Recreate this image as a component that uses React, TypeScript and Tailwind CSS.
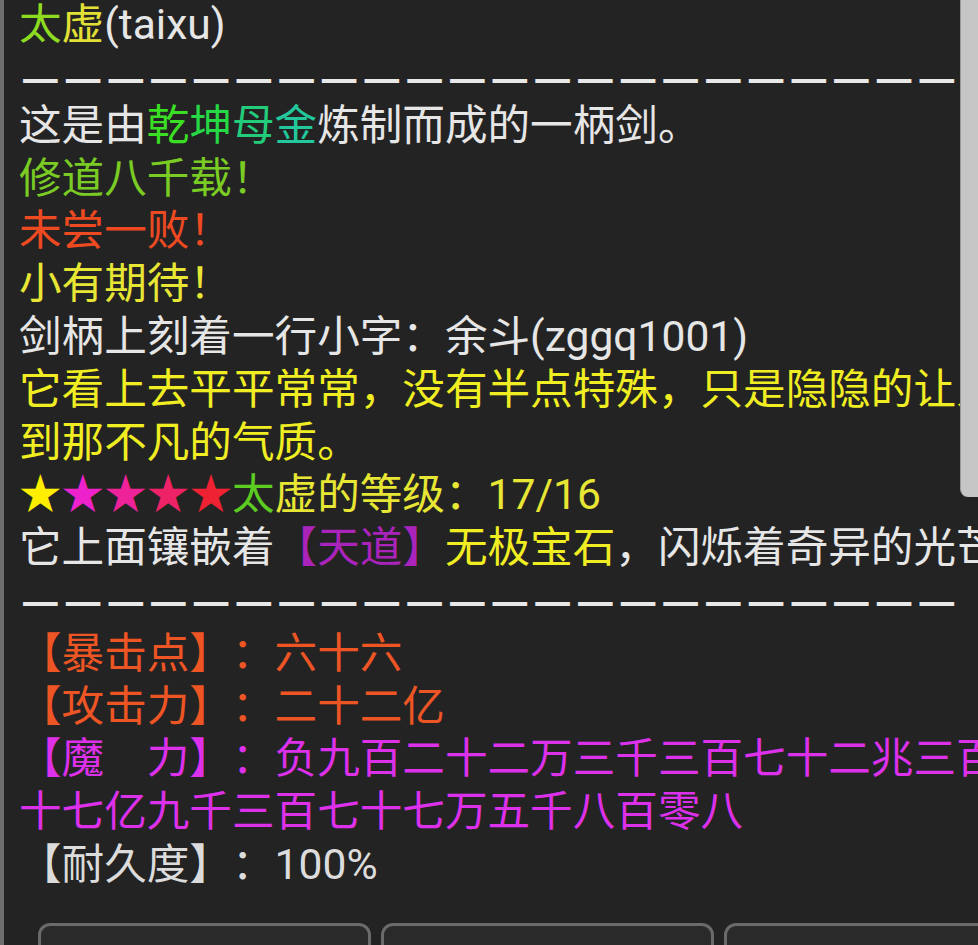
import type { ReactNode } from "react";

const DASH_COUNT = 22;

function Row({ children, className = "" }: { children: ReactNode; className?: string }) {
  return <div className={`h-[52.8px] whitespace-nowrap ${className}`}>{children}</div>;
}

// the dashed rule is a run of em dashes, one per character cell
function Separator({ className = "" }: { className?: string }) {
  return (
    <div className={`flex whitespace-nowrap font-['Noto_Sans_CJK_SC',sans-serif] font-bold text-[#e8e8e8] ${className}`}>
      {Array.from({ length: DASH_COUNT }).map((_, i) => (
        <span key={i} className="inline-block w-[42.7px] text-center">
          —
        </span>
      ))}
    </div>
  );
}

const stars = ["text-[#ffee00]", "text-[#ee22cc]", "text-[#ee2299]", "text-[#ee2266]", "text-[#ee2233]"];

export default function App() {
  return (
    <div className="relative h-[945px] w-[978px] overflow-hidden border-l-[4px] border-[#6e6e6e] bg-[#232323] font-['Roboto','Noto_Sans_CJK_SC',sans-serif] text-[42.6px] leading-[52.8px] text-[#e6e6e6] [text-spacing-trim:space-all]">
      <div className="-mt-[2px] pl-[15px]">
        <Row>
          <span className="text-[#8edc22]">太</span>
          <span className="text-[#e2e036]">虚</span>
          <span>(taixu)</span>
        </Row>
        <Separator className="h-[48px] leading-[48px]" />
        <Row>
          这是由
          <span className="text-[#3ade22]">乾</span>
          <span className="text-[#26d846]">坤</span>
          <span className="text-[#22cc7a]">母</span>
          <span className="text-[#22c89c]">金</span>
          炼制而成的一柄剑。
        </Row>
        <Row className="text-[#7acc24]">修道八千载！</Row>
        <Row className="text-[#ee4a22]">未尝一败！</Row>
        <Row className="text-[#e8e634]">小有期待！</Row>
        <Row>剑柄上刻着一行小字：余斗(zggq1001)</Row>
        <Row className="text-[#f0ee22]">它看上去平平常常，没有半点特殊，只是隐隐的让人感</Row>
        <Row className="text-[#f0ee22]">到那不凡的气质。</Row>
        <Row>
          {stars.map((c, i) => (
            <span key={i} className={c}>
              ★
            </span>
          ))}
          <span className="text-[#5ccc22]">太</span>
          <span className="text-[#e8e634]">虚的等级：17/16</span>
        </Row>
        <Row>
          它上面镶嵌着<span className="text-[#aa24bc]">【天道】</span>
          <span className="text-[#f0ee22]">无极宝石</span>，闪烁着奇异的光芒
        </Row>
        <Separator className="h-[52.8px] leading-[48px]" />
        <Row className="text-[#ee5524]">【暴击点】：六十六</Row>
        <Row className="text-[#ee5524]">【攻击力】：二十二亿</Row>
        <Row className="text-[#dc30ea]">【魔　力】：负九百二十二万三千三百七十二兆三百六</Row>
        <Row className="text-[#dc30ea]">十七亿九千三百七十七万五千八百零八</Row>
        <Row className="text-[#dcdcdc]">【耐久度】：100%</Row>
      </div>

      <div className="mt-[32px] flex items-start">
        <div className="ml-[18px] mt-[6px] h-[20px] w-[4px] bg-[#7a7a7a]" />
        <div className="ml-[16px] flex gap-[10px]">
          <div className="h-[60px] w-[333px] rounded-[12px] border-[3px] border-[#6a6a6a] bg-[#2a2a2a]" />
          <div className="h-[60px] w-[333px] rounded-[12px] border-[3px] border-[#6a6a6a] bg-[#2a2a2a]" />
          <div className="h-[60px] w-[334px] rounded-[12px] border-[3px] border-[#6a6a6a] bg-[#2a2a2a]" />
        </div>
      </div>

      <div className="absolute right-0 top-0 h-[497px] w-[18px] rounded-bl-[8px] border-l border-[#9a9a9a] bg-[#c6c6c6]" />
    </div>
  );
}
